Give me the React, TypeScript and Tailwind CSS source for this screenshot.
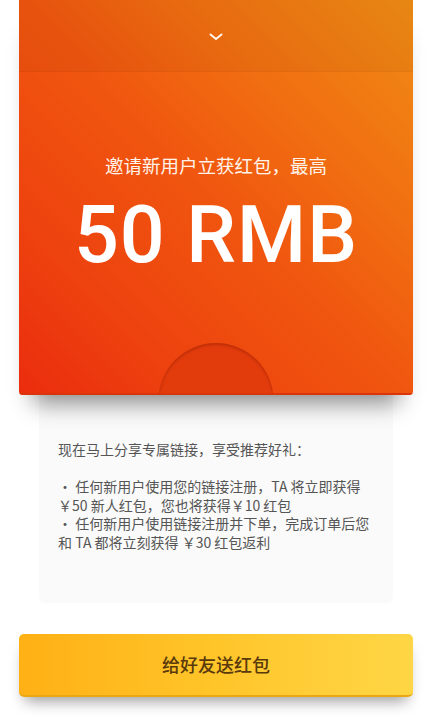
export default function App() {
  return (
    <div className="flex h-[720px] w-full flex-col bg-white font-['Noto_Sans_CJK_SC',sans-serif]">
      {/* 红包卡片 */}
      <div className="relative z-10 mx-[19px] h-[395px] overflow-hidden rounded-b-[4px] bg-gradient-to-tr from-[#eb2c0e] via-[#f0560f] to-[#f08c14] shadow-[0_22px_22px_-14px_rgba(0,0,0,0.45)]">
        <div className="flex h-[72px] items-center justify-center border-b border-[#000]/[0.03] bg-black/[0.035]">
          <svg width="14" height="8" viewBox="0 0 14 8" fill="none" className="mt-[2px]">
            <path d="M1.5 1.5 L7 6 L12.5 1.5" stroke="#fff4e8" strokeWidth="2" strokeLinecap="round" strokeLinejoin="round" />
          </svg>
        </div>
        <div className="flex flex-col items-center">
          <p className="mt-[80px] text-[18.5px] leading-[26px] text-[#fff3ea]">邀请新用户立获红包，最高</p>
          <p className="mt-[17px] font-['Roboto',sans-serif] text-[79px] font-medium leading-[80px] tracking-[1px] text-white">50 RMB</p>
        </div>
        <div className="absolute left-1/2 top-[343px] h-[115px] w-[115px] -translate-x-1/2 rounded-full bg-[#e33c0c] shadow-[inset_0_2px_3px_rgba(120,20,0,0.35)]" />
        <div className="absolute bottom-0 left-0 h-[2px] w-full bg-[#d9340a]" />
      </div>

      {/* 说明 */}
      <div className="mx-[39px] h-[208px] whitespace-nowrap rounded-b-[6px] bg-[#fafafa] px-[19px] pt-[45px] text-[14px] leading-[18.5px] text-[#555]">
        <p>现在马上分享专属链接，享受推荐好礼：</p>
        <p className="mt-[18.5px]">· 任何新用户使用您的链接注册，TA 将立即获得</p>
        <p>￥50 新人红包，您也将获得￥10 红包</p>
        <p>· 任何新用户使用链接注册并下单，完成订单后您</p>
        <p>和 TA 都将立刻获得 ￥30 红包返利</p>
      </div>

      {/* 按钮 */}
      <div className="mx-[19px] mt-[31px]">
        <button className="flex h-[63px] w-full items-center justify-center rounded-[5px] border-b-2 border-[#e9a812] bg-gradient-to-r from-[#ffb014] via-[#ffc529] to-[#ffd645] text-[18px] font-medium text-[#5a3a0c] shadow-[0_10px_14px_-6px_rgba(0,0,0,0.4)]">
          给好友送红包
        </button>
      </div>
    </div>
  );
}
